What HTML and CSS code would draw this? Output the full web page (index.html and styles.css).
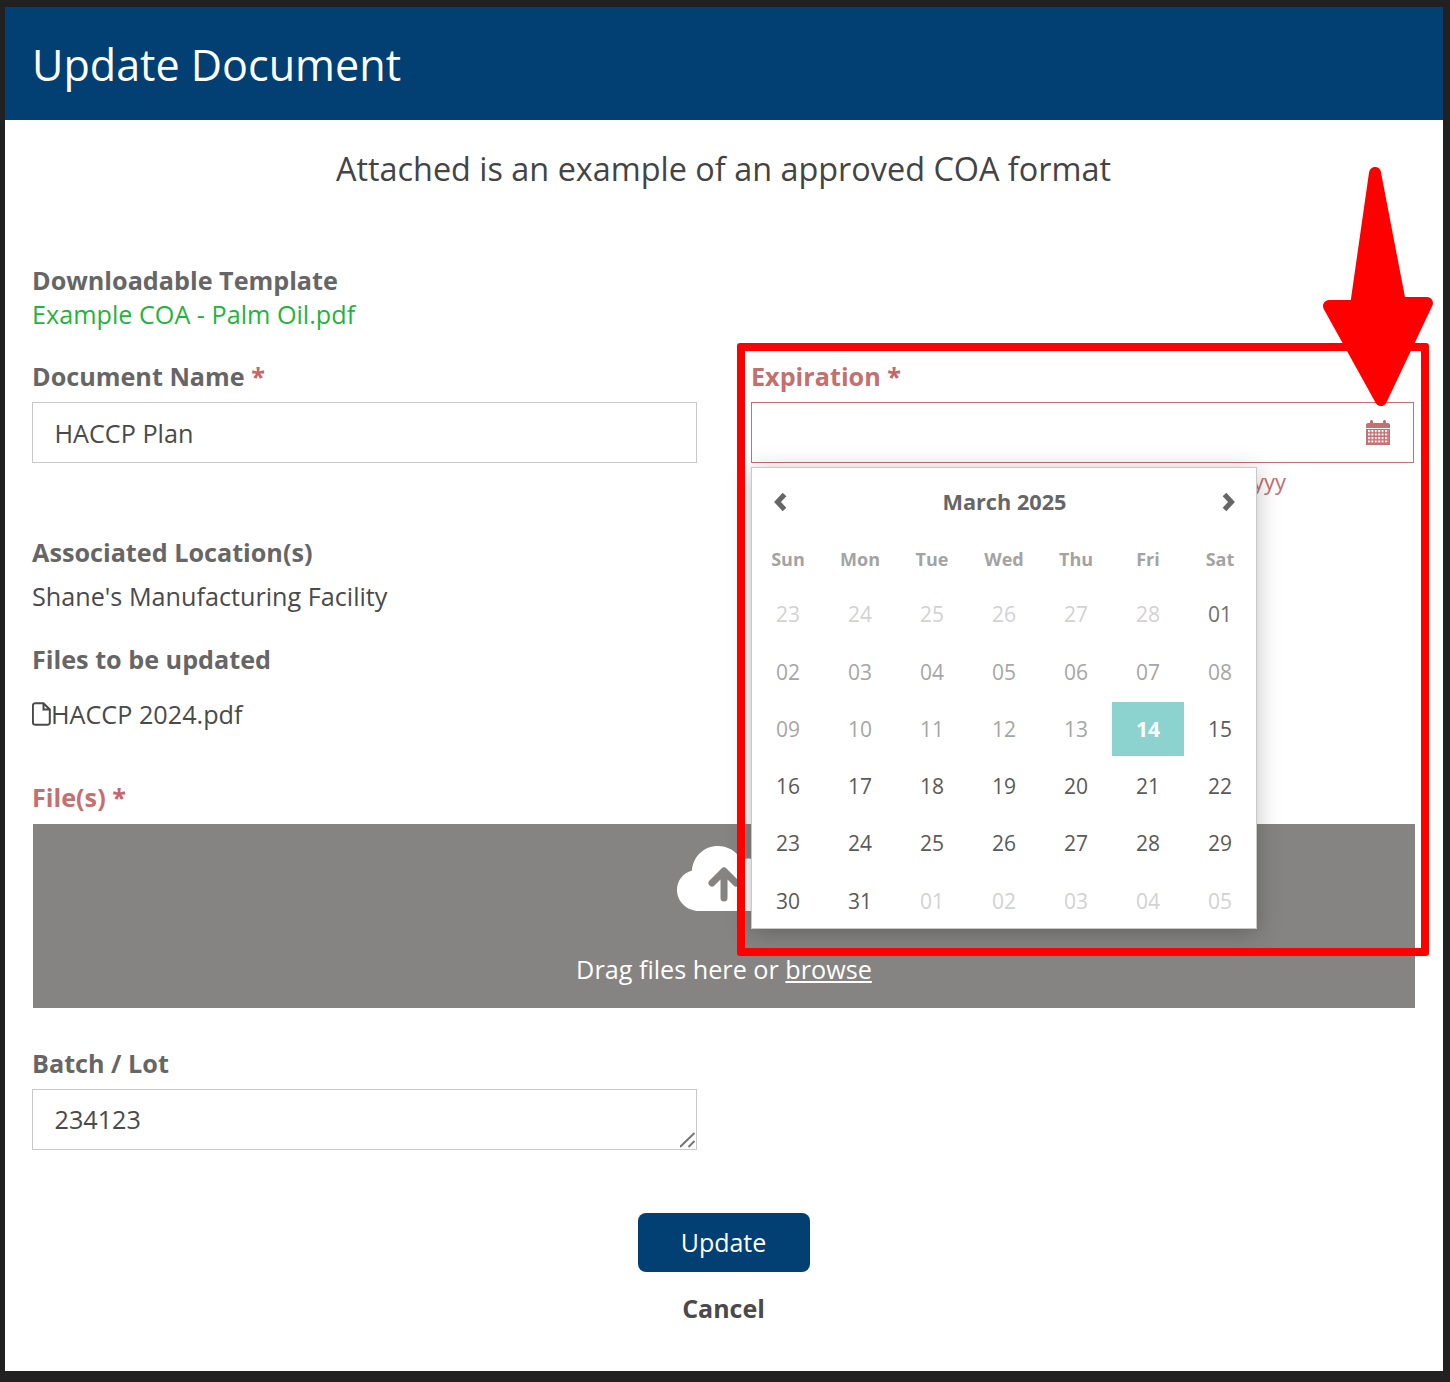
FILE: index.html
```html
<!DOCTYPE html>
<html lang="en">
<head>
<meta charset="utf-8">
<title>Update Document</title>
<link rel="stylesheet" href="styles.css">
</head>
<body>
<div class="modal">
  <header class="modal-head"><h1>Update Document</h1></header>
  <div class="modal-body">
    <p class="intro">Attached is an example of an approved COA format</p>

    <div class="block template">
      <div class="label">Downloadable Template</div>
      <a class="link" href="#">Example COA - Palm Oil.pdf</a>
    </div>

    <div class="two-col">
      <div class="field">
        <label class="label">Document Name <span class="req">*</span></label>
        <input class="control" type="text" value="HACCP Plan">
      </div>
      <div class="field field-error">
        <label class="label">Expiration <span class="req">*</span></label>
        <div class="date-wrap">
          <input class="control" type="text">
          <svg class="cal-icon" viewBox="0 0 24 25" width="24" height="25">
            <defs>
              <pattern id="cal-dots" x="2" y="10" width="3.4" height="3.500" patternUnits="userSpaceOnUse">
                <rect width="2" height="2" fill="#fff"/>
              </pattern>
            </defs>
            <path class="cal-shape" d="M0 5C0 4 .8 3 2 3H4V1.500C4 .7 4.600 0 5.500 0S7 .7 7 1.500V3H17V1.500C17 .7 17.600 0 18.500 0S20 .7 20 1.500V3H22C23.200 3 24 4 24 5V25H0Z"/>
            <rect x="0" y="8" width="24" height="1" fill="#fff"/>
            <rect x="2" y="10" width="20.400" height="14" fill="url(#cal-dots)"/>
          </svg>
        </div>
        <div class="hint">mm/dd/yyyy</div>

        <div class="datepicker">
          <div class="dp-head">
            <svg class="dp-nav" viewBox="0 0 16 20" width="16" height="20"><polyline points="12.500,2.500 5.500,10 12.500,17.500"/></svg>
            <span class="dp-title">March 2025</span>
            <svg class="dp-nav" viewBox="0 0 16 20" width="16" height="20"><polyline points="3.500,2.500 10.500,10 3.500,17.500"/></svg>
          </div>
          <div class="dp-week">
            <span>Sun</span><span>Mon</span><span>Tue</span><span>Wed</span><span>Thu</span><span>Fri</span><span>Sat</span>
          </div>
          <div class="dp-days">
            <span class="off">23</span><span class="off">24</span><span class="off">25</span><span class="off">26</span><span class="off">27</span><span class="off">28</span><span class="dim">01</span>
            <span class="past">02</span><span class="past">03</span><span class="past">04</span><span class="past">05</span><span class="past">06</span><span class="past">07</span><span class="past">08</span>
            <span class="past">09</span><span class="past">10</span><span class="past">11</span><span class="past">12</span><span class="past">13</span><span class="today">14</span><span>15</span>
            <span>16</span><span>17</span><span>18</span><span>19</span><span>20</span><span>21</span><span>22</span>
            <span>23</span><span>24</span><span>25</span><span>26</span><span>27</span><span>28</span><span>29</span>
            <span>30</span><span>31</span><span class="off">01</span><span class="off">02</span><span class="off">03</span><span class="off">04</span><span class="off">05</span>
          </div>
        </div>
      </div>
    </div>

    <div class="block locations">
      <div class="label">Associated Location(s)</div>
      <div class="value">Shane's Manufacturing Facility</div>
    </div>

    <div class="block files">
      <div class="label">Files to be updated</div>
      <div class="file-row">
        <svg class="file-icon" viewBox="0 0 19 24" width="19" height="24"><path d="M3 1.200H11.500L17.800 7.500V20.500A2.300 2.300 0 0 1 15.500 22.800H3A2.300 2.300 0 0 1 .9 20.500V3.500A2.300 2.300 0 0 1 3 1.200ZM11.500 1.200V7.500H17.800"/></svg>
        <span>HACCP 2024.pdf</span>
      </div>
    </div>

    <div class="block upload field-error">
      <div class="label">File(s) <span class="req">*</span></div>
      <div class="dropzone">
        <svg class="cloud" viewBox="0 0 94 65" width="94" height="65">
          <path class="cloud-fill" d="M22 65C10 65 0 55.500 0 44 0 34.500 6 27 15 24.500 16 10.500 27 0 41 0 51 0 60 5.500 64 14 66.500 13 69 12.500 72 12.500 83 12.500 91 21 91 31 91 33 90.500 34.500 90 36 92.500 39 94 42 94 46 94 56.500 85.500 65 75 65Z"/>
          <path class="cloud-arrow" d="M47 52V25M35 37L47 25L59 37"/>
        </svg>
        <div class="drop-text">Drag files here or <u>browse</u></div>
      </div>
    </div>

    <div class="block batch">
      <label class="label">Batch / Lot</label>
      <div class="area-wrap">
        <textarea class="control area">234123</textarea>
        <svg class="grip" viewBox="0 0 16 16" width="16" height="16"><path d="M0 15L14.500 1M8.500 15L14.500 9"/></svg>
      </div>
    </div>

    <div class="actions">
      <button class="btn" type="button">Update</button>
      <a class="cancel" href="#">Cancel</a>
    </div>
  </div>
</div>

<div class="callout-box"></div>
<svg class="callout-arrow" viewBox="0 0 120 250" width="120" height="250">
  <polygon points="57,11 82,141 109,141 63,238 11,144 38,144"/>
</svg>
</body>
</html>
```
FILE: styles.css
```css
* { box-sizing: border-box; }
html, body { margin: 0; padding: 0; }
body {
  background: #212121;
  width: 1450px;
  height: 1382px;
  padding: 7px 7px 11px 5px;
  position: relative;
  overflow: hidden;
  font-family: "Open Sans", "Noto Sans", sans-serif;
  color: #4a4a4a;
}
.modal { background: #fff; height: 1364px; }
.modal-head {
  background: #023f72;
  height: 113px;
  padding: 2px 27px 0;
  display: flex;
  align-items: center;
}
.modal-head h1 {
  margin: 0;
  font-size: 43.100px;
  font-weight: 400;
  color: #fff;
  line-height: 1;
}
.modal-body { padding: 0 28px 0 27px; }
.intro {
  margin: 0;
  padding-top: 25px;
  height: 143px;
  text-align: center;
  font-size: 32.400px;
  line-height: 46px;
  color: #444;
}
.label {
  display: block;
  font-size: 25.200px;
  font-weight: 700;
  line-height: 34px;
  color: #666;
}
.req { font-weight: 700; color: #c4666a; }
.link { display: block; font-size: 25.200px; line-height: 34px; color: #1fb53a; text-decoration: none; }
.template { height: 96px; }
.two-col {
  display: grid;
  grid-template-columns: 665px 663px;
  column-gap: 54px;
  height: 176px;
}
.field { position: relative; }
.field .label { margin-bottom: 9px; }
.control {
  display: block;
  width: 100%;
  height: 61px;
  border: 1px solid #c8c8c8;
  border-radius: 0;
  background: #fff;
  padding: 0 21.500px;
  font-family: inherit;
  font-size: 25.200px;
  color: #4a4a4a;
  outline: none;
}
.field-error .label { color: #c4706f; }
.field .date-wrap .control { border-color: #c4706f; }
.date-wrap { position: relative; }
.cal-icon { position: absolute; right: 24px; top: 18px; }
.cal-shape { fill: #c4706f; }
.hint {
  width: 535px;
  margin-top: 2px;
  font-size: 22px;
  line-height: 32px;
  text-align: right;
  color: #c4706f;
}
.datepicker {
  position: absolute;
  left: 0;
  top: 108px;
  width: 506px;
  height: 462px;
  background: #fff;
  border: 1px solid #c8c8c8;
  box-shadow: 0 4px 22px rgba(0, 0, 0, .25);
  z-index: 2;
}
.dp-head {
  height: 68px;
  padding: 0 19px 0 20px;
  display: flex;
  align-items: center;
  justify-content: space-between;
}
.dp-title { font-size: 21.700px; font-weight: 700; color: #666; position: relative; top: -1px; }
.dp-nav { fill: none; stroke: #666; stroke-width: 5; }
.dp-week, .dp-days { display: grid; grid-template-columns: repeat(7, 72px); }
.dp-week { height: 44px; padding-top: 1px; align-items: center; text-align: center; font-size: 18px; font-weight: 700; color: #a3a3a3; }
.dp-days { grid-auto-rows: 54px; row-gap: 3.300px; margin-top: 7.300px; }
.dp-days span {
  display: flex;
  align-items: center;
  justify-content: center;
  font-size: 21px;
  color: #5a5a5a;
}
.dp-days .off { color: #d2d2d2; }
.dp-days .past { color: #a6a6a6; }
.dp-days .dim { color: #707070; }
.dp-days .today { background: #8cd3cf; color: #fff; font-weight: 700; }
.locations { height: 107px; }
.value { font-size: 25.200px; line-height: 34px; margin-top: 10px; color: #4a4a4a; }
.files { height: 138px; }
.file-row { display: flex; align-items: center; margin-top: 21px; font-size: 25.200px; line-height: 34px; color: #4a4a4a; }
.file-icon { fill: none; stroke: #4a4a4a; stroke-width: 2; flex: none; }
.upload { height: 248px; }
.upload .label { margin-bottom: 10px; }
.dropzone {
  width: 1382px;
  margin-left: 1px;
  height: 184px;
  background: #858482;
  padding-top: 22px;
  text-align: center;
}
.cloud { display: block; margin: 0 auto; }
.cloud-fill { fill: #fff; }
.cloud-arrow { fill: none; stroke: #858482; stroke-width: 7; stroke-linecap: round; stroke-linejoin: round; }
.drop-text { margin-top: 41px; font-size: 25.200px; line-height: 34px; color: #fff; }
.batch { padding-top: 18px; height: 185px; }
.batch .label { margin-bottom: 9px; }
.area-wrap { position: relative; width: 665px; }
.area { resize: none; padding: 11px 21.500px; line-height: 36px; overflow: hidden; }
.grip { position: absolute; right: 1px; bottom: 2px; fill: none; stroke: #777; stroke-width: 2; }
.actions { display: flex; flex-direction: column; align-items: center; }
.btn {
  width: 172px;
  height: 59px;
  border: 0;
  border-radius: 8px;
  padding: 0 0 2px;
  background: #023f72;
  color: #fff;
  font-family: inherit;
  font-size: 25px;
}
.cancel { margin-top: 19px; font-size: 25px; font-weight: 700; line-height: 34px; color: #4a4a4a; text-decoration: none; }
.callout-box {
  position: absolute;
  left: 737px;
  top: 343px;
  width: 692px;
  height: 613px;
  border: 8.500px solid #f00;
  border-radius: 3px;
  z-index: 3;
}
.callout-arrow {
  position: absolute;
  left: 1318px;
  top: 162px;
  z-index: 4;
}
.callout-arrow polygon { fill: #f00; stroke: #f00; stroke-width: 12; stroke-linejoin: round; }
```
